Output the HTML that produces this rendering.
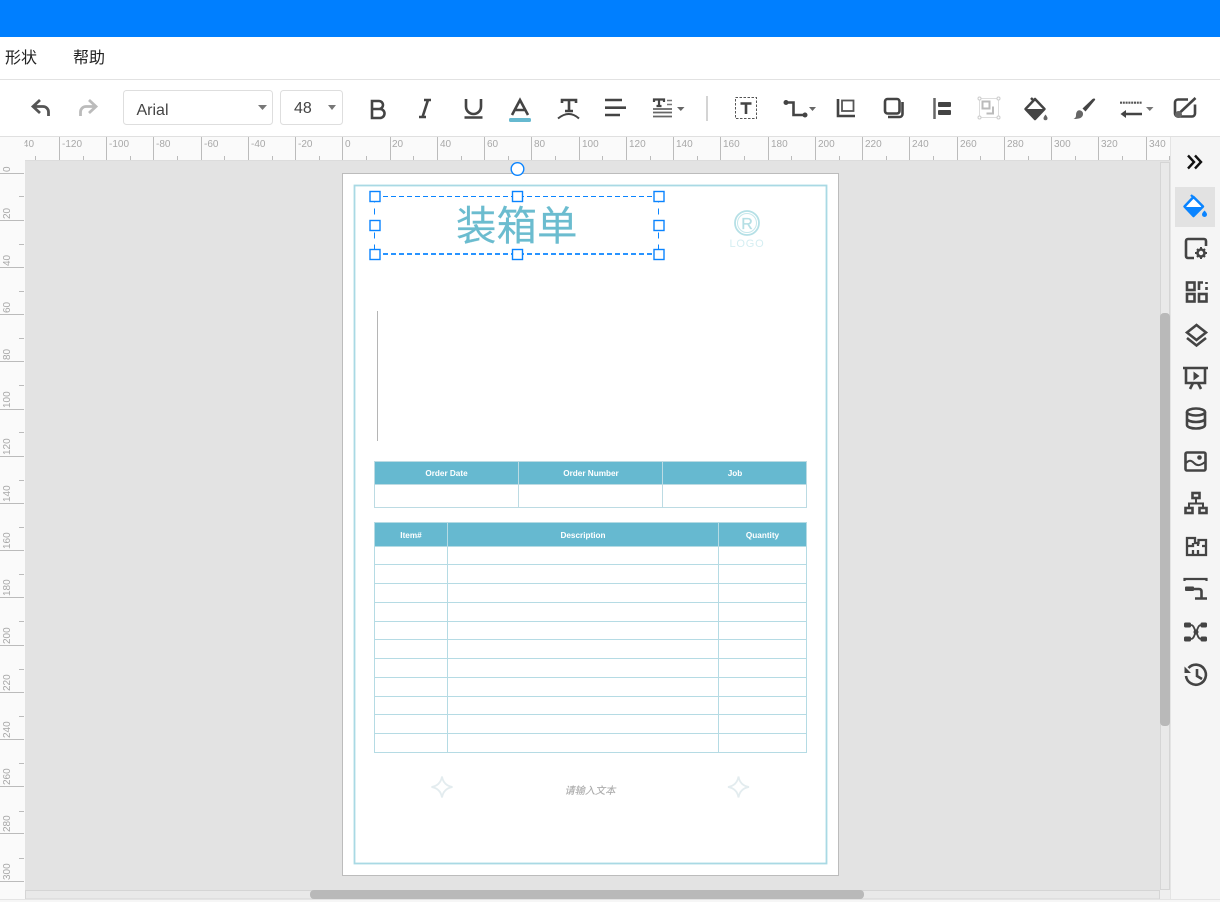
<!DOCTYPE html>
<html><head><meta charset="utf-8"><title>装箱单</title>
<style>
html,body{margin:0;padding:0;background:#fff;width:1220px;height:902px;overflow:hidden}
svg{display:block;position:absolute;left:0;top:0}
text{font-family:"Liberation Sans","Noto Sans CJK SC",sans-serif}
.r{font-size:10px;fill:#a8a8a8}
.th{font-size:8.2px;font-weight:bold;fill:#fff;text-anchor:middle}
.i{fill:none;stroke:#444;stroke-width:2.6}
.h{fill:#fff;stroke:#0a84ff;stroke-width:1.4}
</style></head><body>
<svg width="1220" height="902" viewBox="0 0 1220 902" xmlns="http://www.w3.org/2000/svg">
<rect width="1220" height="902" fill="#fff"/>
<rect width="1220" height="37" fill="#007fff"/>
<text x="5" y="63" font-size="16" fill="#222">形状</text>
<text x="73" y="63" font-size="16" fill="#222">帮助</text>
<path d="M0 79.500H1220" stroke="#e2e2e2"/>

<!-- toolbar -->
<path class="i" style="stroke:#555;stroke-width:2.800" d="M40 100L33 106.500L40 113M33 106.500H43a5.500 5.500 0 0 1 5.500 5.500V116"/>
<path class="i" style="stroke:#bbb;stroke-width:2.800" d="M89 100L96 106.500L89 113M96 106.500H86a5.500 5.500 0 0 0-5.500 5.500V116"/>
<rect x="123.500" y="90.500" width="149" height="34" rx="3" fill="#fff" stroke="#dedede"/>
<text x="136.500" y="115" font-size="16" fill="#444">Arial</text>
<path d="M258 105h9l-4.500 5z" fill="#777"/>
<rect x="280.500" y="90.500" width="62" height="34" rx="3" fill="#fff" stroke="#dedede"/>
<text x="294" y="113" font-size="16" fill="#444">48</text>
<path d="M328 105h8l-4 5z" fill="#777"/>

<path class="i" d="M372 101h7a4 4 0 0 1 0 8h-7zM372 109h8a4.500 4.500 0 0 1 0 9h-8z"/>
<path class="i" d="M424 100h7M419 117h7M428 100l-5.500 17"/>
<path class="i" d="M466 99v7.500a7.500 7.500 0 0 0 15 0V99M464.500 117.500h18"/>
<path class="i" d="M512 115L520 100L528 115M515 110h10"/>
<rect x="509" y="118" width="22" height="4" rx="1.500" fill="#66b9d0"/>
<path class="i" d="M562 103v-3h14v3M569 100v11M565 111h8"/>
<path class="i" style="stroke-width:2" d="M558 118.500q11-9 21 0"/>
<path class="i" d="M605 100h17M605 107.700h21M605 115h15"/>
<path class="i" style="stroke-width:2.200" d="M654 102v-2.500h10v2.500M659 99.500v6.500M656.500 106h5"/>
<path d="M667 100.500h5M667 104.500h5" stroke="#777" stroke-width="1.500"/>
<path d="M653 109h19M653 112.500h19M653 116.500h19" stroke="#666" stroke-width="1.800"/>
<path d="M677 107h7.500l-3.700 4z" fill="#666"/>
<path d="M707 96V121" stroke="#d4d4d4" stroke-width="2"/>
<rect x="735.500" y="97.500" width="21" height="21" fill="none" stroke="#555" stroke-dasharray="2.500 1.500"/>
<path class="i" d="M740.500 103.500h11M746 103V114"/>
<circle cx="786" cy="102.500" r="2.500" fill="#444"/><circle cx="805" cy="115" r="2.500" fill="#444"/>
<path class="i" d="M786 102.500h7.500V115H805"/>
<path d="M809 107h7l-3.500 4z" fill="#666"/>
<path class="i" d="M838 99v17h17"/>
<rect x="842" y="100.500" width="11.500" height="10.500" fill="none" stroke="#555" stroke-width="1.800"/>
<rect x="885" y="99" width="14.500" height="14.500" rx="2.500" class="i"/>
<path class="i" d="M902.500 102v12a3 3 0 0 1-3 3H888"/>
<path d="M934.500 98v21" stroke="#666" stroke-width="2.500"/>
<rect x="938" y="102" width="13" height="5" rx="1" fill="#444"/><rect x="938" y="110" width="13" height="5" rx="1" fill="#444"/>
<rect x="979.500" y="98.500" width="19" height="19" fill="none" stroke="#ddd"/>
<g fill="#fff" stroke="#ccc"><circle cx="979.500" cy="98.500" r="1.500"/><circle cx="998.500" cy="98.500" r="1.500"/><circle cx="979.500" cy="117.500" r="1.500"/><circle cx="998.500" cy="117.500" r="1.500"/></g>
<path d="M982.500 101.500h7v7h-7zM986.500 113.500h6.500v-7" fill="none" stroke="#bbb" stroke-width="2"/>
<path d="M1035 99L1025.500 109L1035 119L1044.500 109Z" fill="#fff" stroke="#444" stroke-width="2.500" stroke-linejoin="round"/>
<path d="M1026 109H1044L1035 119Z" fill="#444"/><path d="M1031 98l3 3" stroke="#444" stroke-width="2.500"/>
<path d="M1045.500 114.500q-2 2.500-2 3.700a2 2 0 0 0 4 0q0-1.200-2-3.700z" fill="#666"/>
<path d="M1094 98.500c1 0 1.500.7 1 1.500l-9.500 11.500-3-3L1092.500 99c.5-.4 1-.5 1.500-.5z" fill="#444"/>
<path d="M1078 110.500c2.500-1 5.500 1 5 4-.5 3.500-4 4.500-9.500 4.500 2-1 2.500-2 2.500-4 0-2 .8-3.800 2-4.500z" fill="#666"/>
<path d="M1120 102.700h22" stroke="#555" stroke-width="2.200" stroke-dasharray="2 .8"/>
<path d="M1142 114h-18" stroke="#444" stroke-width="2.400"/><path d="M1120.500 114l5.500-4v8z" fill="#444"/>
<path d="M1146 107h7.500l-3.700 4z" fill="#777"/>
<path class="i" d="M1188 99.500h-10a3 3 0 0 0-3 3v11a3 3 0 0 0 3 3h14a3 3 0 0 0 3-3v-9"/>
<path class="i" d="M1180 112.500L1195.500 98"/><circle cx="1178.500" cy="114.500" r="3.500" fill="#666"/>

<!-- workspace -->
<rect x="0" y="136" width="1170" height="763" fill="#fafafa"/>
<path d="M0 136.500H1220" stroke="#e0e0e0"/>
<rect x="25" y="160" width="1145" height="739" fill="#e3e3e3"/>
<path d="M25 160.500H1170" stroke="#dcdcdc"/>

<!-- top ruler -->
<g class="r">
<text class="r" x="14" y="147">-140</text><text class="r" x="62" y="147">-120</text><text class="r" x="109" y="147">-100</text><text class="r" x="156" y="147">-80</text><text class="r" x="204" y="147">-60</text><text class="r" x="251" y="147">-40</text><text class="r" x="298" y="147">-20</text><text class="r" x="345" y="147">0</text><text class="r" x="392" y="147">20</text><text class="r" x="440" y="147">40</text><text class="r" x="487" y="147">60</text><text class="r" x="534" y="147">80</text><text class="r" x="582" y="147">100</text><text class="r" x="629" y="147">120</text><text class="r" x="676" y="147">140</text><text class="r" x="723" y="147">160</text><text class="r" x="771" y="147">180</text><text class="r" x="818" y="147">200</text><text class="r" x="865" y="147">220</text><text class="r" x="912" y="147">240</text><text class="r" x="960" y="147">260</text><text class="r" x="1007" y="147">280</text><text class="r" x="1054" y="147">300</text><text class="r" x="1101" y="147">320</text><text class="r" x="1149" y="147">340</text>
</g>
<path stroke="#bbb" fill="none" d="M59.500 137V160M106.500 137V160M153.500 137V160M201.500 137V160M248.500 137V160M295.500 137V160M342.500 137V160M390.500 137V160M437.500 137V160M484.500 137V160M531.500 137V160M579.500 137V160M626.500 137V160M673.500 137V160M720.500 137V160M768.500 137V160M815.500 137V160M862.500 137V160M909.500 137V160M957.500 137V160M1004.500 137V160M1051.500 137V160M1098.500 137V160M1146.500 137V160"/>
<path stroke="#bbb" fill="none" d="M35.500 156V160M83.500 156V160M130.500 156V160M177.500 156V160M224.500 156V160M272.500 156V160M319.500 156V160M366.500 156V160M413.500 156V160M461.500 156V160M508.500 156V160M555.500 156V160M602.500 156V160M650.500 156V160M697.500 156V160M744.500 156V160M791.500 156V160M839.500 156V160M886.500 156V160M933.500 156V160M980.500 156V160M1028.500 156V160M1075.500 156V160M1122.500 156V160M1169.500 156V160"/>
<rect x="0" y="137" width="24.500" height="24" fill="#fafafa"/>

<!-- left ruler -->
<path stroke="#bbb" fill="none" d="M0 173.500H24M0 220.500H24M0 267.500H24M0 314.500H24M0 361.500H24M0 409.500H24M0 456.500H24M0 503.500H24M0 550.500H24M0 597.500H24M0 645.500H24M0 692.500H24M0 739.500H24M0 786.500H24M0 833.500H24M0 881.500H24"/>
<path stroke="#bbb" fill="none" d="M19 196.500H24M19 244.500H24M19 291.500H24M19 338.500H24M19 385.500H24M19 432.500H24M19 480.500H24M19 527.500H24M19 574.500H24M19 621.500H24M19 669.500H24M19 716.500H24M19 763.500H24M19 811.500H24M19 858.500H24"/>
<text class="r" transform="translate(10 172) rotate(-90)">0</text><text class="r" transform="translate(10 219) rotate(-90)">20</text><text class="r" transform="translate(10 266) rotate(-90)">40</text><text class="r" transform="translate(10 313) rotate(-90)">60</text><text class="r" transform="translate(10 360) rotate(-90)">80</text><text class="r" transform="translate(10 408) rotate(-90)">100</text><text class="r" transform="translate(10 455) rotate(-90)">120</text><text class="r" transform="translate(10 502) rotate(-90)">140</text><text class="r" transform="translate(10 549) rotate(-90)">160</text><text class="r" transform="translate(10 596) rotate(-90)">180</text><text class="r" transform="translate(10 644) rotate(-90)">200</text><text class="r" transform="translate(10 691) rotate(-90)">220</text><text class="r" transform="translate(10 738) rotate(-90)">240</text><text class="r" transform="translate(10 785) rotate(-90)">260</text><text class="r" transform="translate(10 832) rotate(-90)">280</text><text class="r" transform="translate(10 880) rotate(-90)">300</text>

<!-- page -->
<rect x="342.500" y="173.500" width="496" height="702" fill="#fff" stroke="#bcbcbc"/>
<rect x="354.500" y="185.500" width="472" height="678" fill="none" stroke="#a9d9e4" stroke-width="1.800"/>

<text x="456" y="240" font-size="40.500" fill="#6bbccf" stroke="#6bbccf" stroke-width=".15">装箱单</text>

<!-- logo -->
<circle cx="747" cy="223" r="12" fill="none" stroke="#b5e0e6" stroke-width="1.800"/>
<circle cx="747" cy="223" r="9.500" fill="none" stroke="#c6e7eb"/>
<text x="747" y="229" font-size="16" fill="#b5dfe5" stroke="#b5dfe5" stroke-width=".3" text-anchor="middle">R</text>
<text x="747" y="247" font-size="11" fill="#d5eef2" text-anchor="middle" letter-spacing=".8">LOGO</text>

<path d="M377.500 311V441" stroke="#b5b5b5"/>

<!-- table 1 -->
<rect x="374.500" y="461.500" width="432" height="23" fill="#66b9d0"/>
<path fill="none" stroke="#bcdbe3" d="M374.500 461.500H806.500V507.500H374.500ZM374.500 484.500H806.500M518.500 461.500V507.500M662.500 461.500V507.500"/>
<text class="th" x="446.500" y="476">Order Date</text>
<text class="th" x="591" y="476">Order Number</text>
<text class="th" x="735" y="476">Job</text>

<!-- table 2 -->
<rect x="374.500" y="522.500" width="432" height="24" fill="#66b9d0"/>
<path fill="none" stroke="#b5dbe4" d="M374.500 522.500H806.500V752.500H374.500ZM447.500 522.500V752.500M718.500 522.500V752.500M374.500 546.500H806.500M374.500 564.500H806.500M374.500 583.500H806.500M374.500 602.500H806.500M374.500 621.500H806.500M374.500 639.500H806.500M374.500 658.500H806.500M374.500 677.500H806.500M374.500 696.500H806.500M374.500 714.500H806.500M374.500 733.500H806.500"/>
<text class="th" x="411" y="538">Item#</text>
<text class="th" x="583" y="538">Description</text>
<text class="th" x="762.500" y="538">Quantity</text>

<!-- footer -->
<path d="M442 776.500Q443.500 785.500 452.500 787Q443.500 788.500 442 797.500Q440.500 788.500 431.500 787Q440.500 785.500 442 776.500Z" fill="none" stroke="#e3ecef" stroke-width="1.800"/>
<path d="M738.500 776.500Q740 785.500 749 787Q740 788.500 738.500 797.500Q737 788.500 728 787Q737 785.500 738.500 776.500Z" fill="none" stroke="#e3ecef" stroke-width="1.800"/>
<text x="564.500" y="794" font-size="10.200" font-style="italic" fill="#a8a8a8" stroke="#a8a8a8" stroke-width=".08">请输入文本</text>

<!-- selection -->
<path d="M375 196.500H658.500" stroke="#0a84ff" stroke-dasharray="5 3" fill="none"/>
<path d="M375 254H658.500" stroke="#0a84ff" stroke-width="1.700" stroke-dasharray="5 3" fill="none"/>
<path d="M374.500 196.500V254M658.500 196.500V254" stroke="#0a84ff" stroke-dasharray="6 6" fill="none"/>
<g>
<rect class="h" x="370" y="191.500" width="10" height="10"/><rect class="h" x="512.500" y="191.500" width="10" height="10"/><rect class="h" x="654" y="191.500" width="10" height="10"/>
<rect class="h" x="370" y="220.500" width="10" height="10"/><rect class="h" x="654" y="220.500" width="10" height="10"/>
<rect class="h" x="370" y="249.500" width="10" height="10"/><rect class="h" x="512.500" y="249.500" width="10" height="10"/><rect class="h" x="654" y="249.500" width="10" height="10"/>
</g>
<circle cx="517.500" cy="169" r="6.300" fill="#fff" stroke="#0a84ff" stroke-width="1.400"/>

<!-- scrollbars -->
<rect x="1160.500" y="162.500" width="9" height="727" fill="#e9e9e9" stroke="#d5d5d5"/>
<rect x="1160" y="313" width="10" height="413" rx="4" fill="#b9b9b9"/>
<rect x="25.500" y="890.500" width="1134" height="8.500" fill="#e9e9e9" stroke="#d5d5d5"/>
<rect x="310" y="890" width="554" height="9" rx="4" fill="#b9b9b9"/>
<rect x="1160" y="890" width="10" height="9" fill="#efefef"/>
<rect x="0" y="899" width="1220" height="3" fill="#f6f6f6"/>
<path d="M0 899.500H1220" stroke="#e4e4e4"/>

<!-- right panel -->
<rect x="1170" y="137" width="50" height="762" fill="#f5f5f5"/>
<path d="M1170.500 137V899" stroke="#e4e4e4"/>
<path d="M1188 155.500L1194 162L1188 168.500M1195 155.500L1201 162L1195 168.500" fill="none" stroke="#111" stroke-width="2.400"/>
<rect x="1175" y="187" width="40" height="40" fill="#e2e2e2"/>
<path d="M1193.500 197L1184.500 206.500L1193.500 216L1203 206.500Z" fill="#fff" stroke="#0a84ff" stroke-width="2.500" stroke-linejoin="round"/>
<path d="M1185 207H1202.500L1193.500 216Z" fill="#0a84ff"/><path d="M1191 195l3.500 3.500" stroke="#0a84ff" stroke-width="2.200"/>
<path d="M1204.500 210.500q-2.500 2.500-2.500 4a2.500 2.500 0 0 0 5 0q0-1.500-2.500-4z" fill="#0a84ff"/>

<g class="i">
<path d="M1194 258H1188a2 2 0 0 1-2-2V241a2 2 0 0 1 2-2h16a2 2 0 0 1 2 2v5"/>
<circle cx="1201" cy="253" r="3.500"/>
<path d="M1201 247v2M1201 257v2M1195 253h2M1205 253h2M1197 249l1 1M1204 256l1 1M1205 249l-1 1M1197 257l1-1" stroke-width="2"/>
<rect x="1187" y="282.500" width="7.500" height="7.500"/><rect x="1187" y="294" width="7.500" height="7.500"/><rect x="1199" y="294" width="7.500" height="7.500"/>
<path d="M1199 290V282.500h4M1206.500 282v2M1206.500 287v3"/>
<path d="M1196.500 325L1206 332.500L1196.500 340L1187 332.500Z"/><path d="M1187 338L1196.500 345.500L1206 338"/>
<path d="M1183 368H1208M1186 368v15h19V368M1190 389l3-6M1201 389l-3-6"/>
<ellipse cx="1196" cy="412" rx="9" ry="3.500"/>
<path d="M1187 412v13c0 2 4 3.500 9 3.500s9-1.500 9-3.500v-13M1187 418.500c0 2 4 3.500 9 3.500s9-1.500 9-3.500"/>
<rect x="1185.500" y="452.500" width="20" height="18" rx="1.500"/>
<path d="M1186 463c3-3 5-3 8 0s6 3 11-1" stroke-width="2"/>
<rect x="1192.500" y="493" width="7" height="5"/><rect x="1185.500" y="508" width="7" height="5"/><rect x="1199.500" y="508" width="7" height="5"/>
<path d="M1196 498v5M1189 508v-4.500h14v4.500" stroke-width="2"/>
<path d="M1187 538h8v5h3.500v-3h7.500v15H1187ZM1187 546h6v-3M1198 546v-2M1198 555v-5M1193 555v-5M1202 546h3" stroke-width="2.300"/>
<path d="M1184.500 581v-2h22v2" stroke-width="2.200"/>
<path d="M1186 589h13q2.500 0 2.500 2.500V598M1195 598.500h12" stroke-width="2.600"/>
<path d="M1191 625c3 0 3 4 5 7s2 7 5 7M1201 625c-3 0-3 4-5 7s-2 7-5 7" stroke-width="1.800"/>
<path d="M1188.500 668a10 10 0 1 1-2.500 8"/>
<path d="M1197 669v7l5 3"/>
</g>
<rect x="1185" y="586.500" width="9" height="4.500" rx="1" fill="#444"/>
<rect x="1184" y="622.500" width="7" height="5" rx="1.500" fill="#444"/><rect x="1200.500" y="622.500" width="6.500" height="5" rx="1.500" fill="#444"/>
<rect x="1184" y="636.500" width="7" height="5" rx="1.500" fill="#444"/><rect x="1200.500" y="636.500" width="6.500" height="5" rx="1.500" fill="#444"/>
<circle cx="1196" cy="632" r="2.500" fill="#444"/>
<path d="M1193.500 371.500l6 4.500-6 4.500z" fill="#444"/>
<circle cx="1199.500" cy="457.500" r="2.300" fill="#444"/>
<path d="M1184.500 666.500v6.500h6.500z" fill="#444"/>
</svg>
</body></html>
